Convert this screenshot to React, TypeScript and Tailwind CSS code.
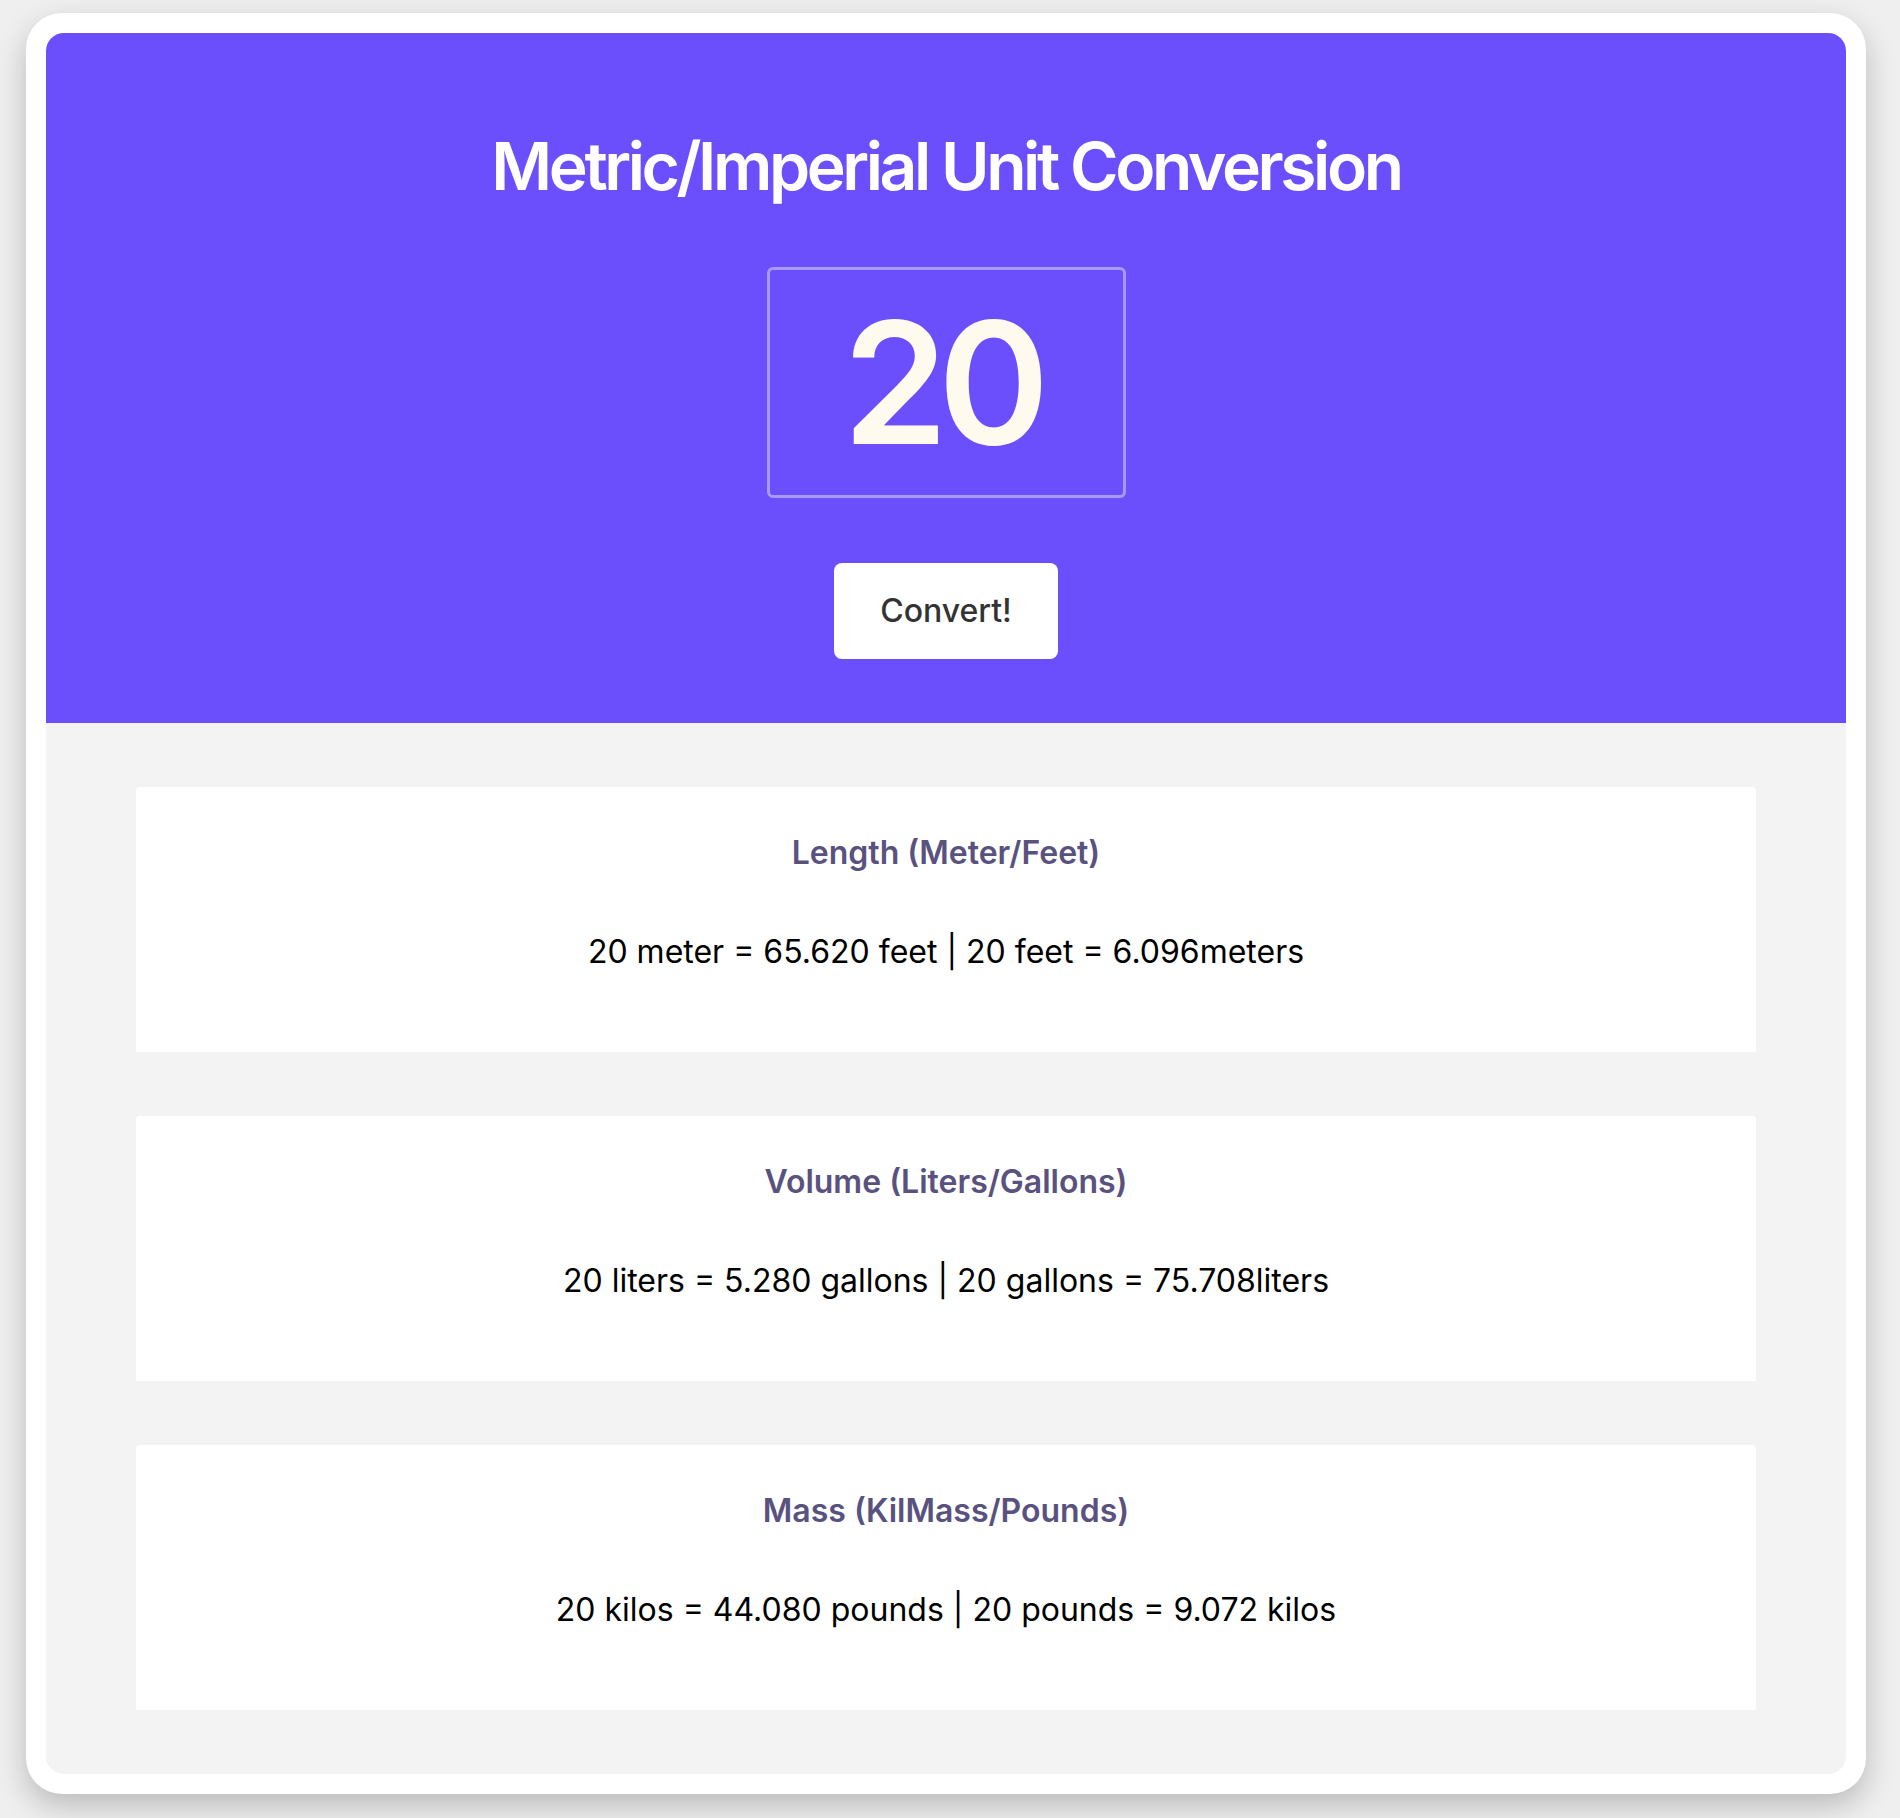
const conversions = [
  {
    title: 'Length (Meter/Feet)',
    text: '20 meter = 65.620 feet | 20 feet = 6.096meters',
  },
  {
    title: 'Volume (Liters/Gallons)',
    text: '20 liters = 5.280 gallons | 20 gallons = 75.708liters',
  },
  {
    title: 'Mass (KilMass/Pounds)',
    text: '20 kilos = 44.080 pounds | 20 pounds = 9.072 kilos',
  },
];

function ResultCard({ title, text }: { title: string; text: string }) {
  return (
    <div className="flex h-[265px] flex-col items-center rounded-t-[4px] bg-white pt-[48px]">
      <h2 className="text-[32px] leading-[36px] font-semibold text-[#59527f]">{title}</h2>
      <p className="mt-[61px] text-[32px] leading-[40px] text-black">{text}</p>
    </div>
  );
}

export default function App() {
  return (
    <div
      className="min-h-[1818px] w-full bg-[#efefef] pt-[13px] pl-[26px]"
      style={{ fontFamily: 'Inter, "Noto Sans", sans-serif' }}
    >
      <div className="w-[1840px] rounded-[36px] bg-white p-[20px] shadow-[0_12px_30px_rgba(0,0,0,0.22)]">
        <div className="overflow-hidden rounded-[18px] bg-[#f3f3f3]">
          <header className="flex flex-col items-center bg-[#6b4ffc] pt-[93px] pb-[64px]">
            <h1 className="text-[66px] leading-[80px] font-semibold tracking-[-0.052em] text-white">
              Metric/Imperial Unit Conversion
            </h1>
            <div className="mt-[61px] flex h-[231px] w-[359px] items-center justify-center rounded-[6px] border-[3px] border-[#ab98fd]">
              <span className="mr-[10px] text-[169px] leading-none font-semibold tracking-[-0.06em] text-[#fffaee]">
                20
              </span>
            </div>
            <button
              type="button"
              className="mt-[65px] h-[96px] w-[224px] rounded-[8px] bg-white text-[32px] font-medium text-[#333333]"
            >
              Convert!
            </button>
          </header>
          <main className="flex flex-col gap-[64px] px-[90px] py-[64px]">
            {conversions.map((c) => (
              <ResultCard key={c.title} title={c.title} text={c.text} />
            ))}
          </main>
        </div>
      </div>
    </div>
  );
}
